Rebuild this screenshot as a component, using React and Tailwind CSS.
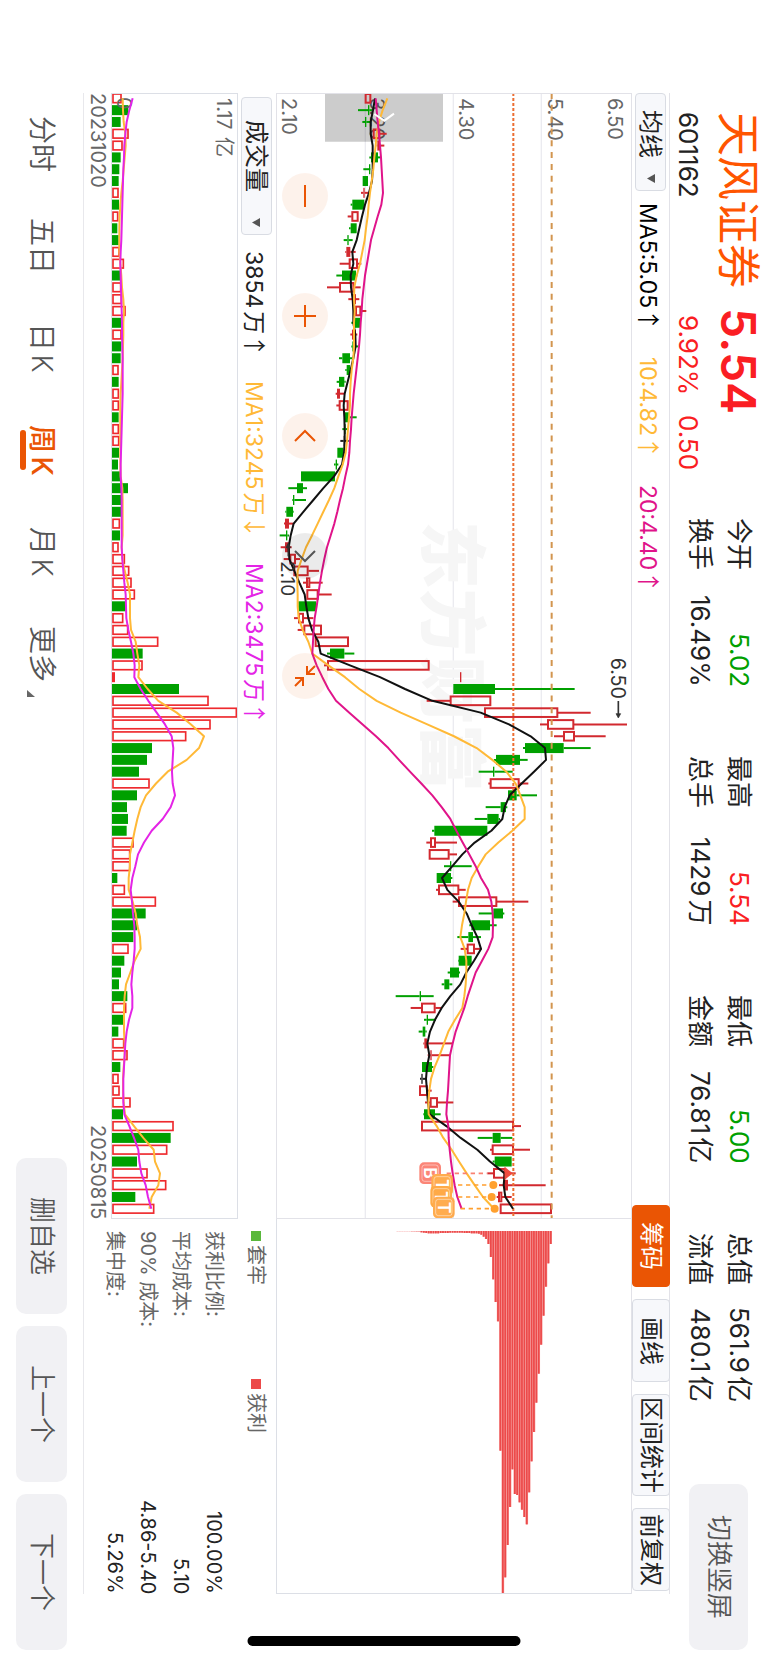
import React from "react";

// Chart geometry is expressed in thirds of a pixel. Each bar takes one step along Y.
const FIRST = 16;
const STEP = 35.44;
const barY = (i) => FIRST + STEP * i;

const GREEN = "#00a000";
const RED = "#d2292f";
const VOLUME_RED = "#ee2a2e";

// kind, low, body start, body end, high. g = down, r = up, f = up filled, k = flat
const CANDLES = [
  ["r", 1095, 1095, 1113, 1113], ["g", 1074, 1104, 1108, 1118], ["g", 1087, 1095, 1099, 1112],
  ["r", 1119, 1119, 1140, 1160], ["f", 1130, 1132, 1140, 1153], ["g", 1108, 1113, 1134, 1141],
  ["g", 1090, 1107, 1111, 1112], ["g", 1088, 1088, 1104, 1104], ["f", 1083, 1090, 1094, 1106],
  ["g", 1052, 1057, 1093, 1093], ["r", 1043, 1055, 1075, 1075], ["g", 1047, 1052, 1070, 1070],
  ["g", 1031, 1042, 1046, 1058], ["f", 1036, 1039, 1051, 1067], ["r", 1019, 1047, 1073, 1084],
  ["g", 1009, 1026, 1068, 1072], ["r", 981, 1018, 1062, 1082], ["f", 1045, 1058, 1068, 1078],
  ["r", 1066, 1066, 1083, 1099], ["g", 1054, 1063, 1080, 1080], ["f", 1051, 1056, 1068, 1072],
  ["g", 1054, 1057, 1063, 1075], ["g", 1017, 1027, 1050, 1056], ["g", 1036, 1040, 1050, 1055],
  ["g", 1010, 1017, 1033, 1037], ["f", 1007, 1011, 1020, 1034], ["r", 1009, 1017, 1045, 1045],
  ["g", 1035, 1035, 1048, 1070], ["g", 1027, 1033, 1037, 1045], ["k", 1021, 1031, 1035, 1046],
  ["g", 1012, 1012, 1030, 1030], ["g", 1002, 1007, 1011, 1015], ["g", 903, 903, 1005, 1005],
  ["g", 865, 891, 909, 921], ["g", 877, 879, 883, 918], ["g", 856, 859, 879, 881],
  ["f", 852, 855, 867, 880], ["g", 839, 858, 862, 867], ["f", 842, 855, 870, 875],
  ["r", 851, 869, 887, 900], ["r", 881, 881, 925, 957], ["r", 909, 919, 930, 968],
  ["r", 920, 920, 955, 995], ["g", 895, 895, 948, 948], ["r", 882, 895, 911, 940],
  ["r", 893, 911, 965, 965], ["r", 945, 945, 1046, 1046], ["g", 981, 990, 1033, 1063],
  ["r", 972, 982, 1288, 1288], ["f", 1380, 1380, 1384, 1384], ["g", 1360, 1360, 1485, 1724],
  ["r", 1280, 1350, 1473, 1473], ["r", 1453, 1453, 1674, 1772], ["r", 1620, 1642, 1722, 1881],
  ["r", 1662, 1690, 1724, 1817], ["g", 1569, 1575, 1691, 1772], ["g", 1482, 1488, 1560, 1583],
  ["g", 1436, 1479, 1483, 1538], ["r", 1465, 1470, 1558, 1585], ["g", 1524, 1524, 1550, 1611],
  ["g", 1457, 1502, 1518, 1522], ["g", 1424, 1462, 1496, 1500], ["g", 1296, 1303, 1462, 1462],
  ["r", 1279, 1291, 1307, 1371], ["r", 1287, 1287, 1348, 1371], ["g", 1332, 1350, 1354, 1415],
  ["g", 1310, 1310, 1353, 1357], ["r", 1308, 1315, 1377, 1397], ["r", 1358, 1375, 1491, 1585],
  ["g", 1436, 1480, 1509, 1513], ["g", 1408, 1414, 1470, 1490], ["g", 1372, 1405, 1419, 1443],
  ["r", 1382, 1401, 1424, 1445], ["g", 1374, 1376, 1415, 1415], ["g", 1343, 1350, 1377, 1380],
  ["g", 1325, 1333, 1348, 1357], ["g", 1187, 1259, 1263, 1301], ["r", 1232, 1264, 1306, 1325],
  ["g", 1272, 1280, 1284, 1308], ["g", 1256, 1268, 1276, 1280], ["f", 1270, 1273, 1281, 1359],
  ["f", 1283, 1291, 1295, 1350], ["g", 1266, 1266, 1296, 1300], ["k", 1260, 1264, 1268, 1280],
  ["r", 1258, 1258, 1283, 1295], ["r", 1275, 1290, 1313, 1360], ["g", 1270, 1272, 1305, 1322],
  ["r", 1264, 1264, 1541, 1563], ["g", 1433, 1478, 1502, 1537], ["r", 1470, 1476, 1541, 1590],
  ["g", 1478, 1484, 1535, 1535], ["r", 1462, 1480, 1515, 1547], ["r", 1497, 1513, 1523, 1637],
  ["r", 1490, 1495, 1506, 1535], ["r", 1500, 1500, 1655, 1655],
];

const MA5 = [
  1125, 1119, 1112, 1112, 1118, 1118, 1118, 1116, 1107, 1095, 1086, 1078, 1070, 1057, 1060, 1052, 1053, 1058, 1060,
  1060, 1066, 1067, 1060, 1052, 1043, 1034, 1031, 1033, 1034, 1034, 1032, 1026, 1002, 970, 940, 910, 881, 872, 866,
  868, 883, 898, 914, 919, 925, 936, 955, 962, 1050, 1140, 1215, 1297, 1442, 1527, 1592, 1635, 1638, 1602, 1565, 1529,
  1514, 1507, 1474, 1424, 1387, 1357, 1326, 1342, 1376, 1400, 1415, 1432, 1443, 1422, 1399, 1381, 1351, 1325, 1305,
  1290, 1282, 1288, 1281, 1278, 1281, 1284, 1289, 1339, 1382, 1432, 1470, 1514, 1511, 1516, 1539,
];
const MA10 = [
  1162, 1148, 1137, 1130, 1127, 1123, 1120, 1115, 1110, 1106, 1103, 1098, 1094, 1087, 1080, 1070, 1063, 1062, 1064,
  1062, 1062, 1062, 1060, 1055, 1052, 1050, 1050, 1047, 1044, 1041, 1037, 1028, 1015, 1003, 987, 970, 953, 936, 918,
  905, 893, 892, 893, 893, 896, 908, 925, 937, 985, 1035, 1078, 1130, 1202, 1282, 1362, 1430, 1477, 1519, 1547, 1561,
  1574, 1574, 1537, 1495, 1457, 1435, 1415, 1404, 1398, 1393, 1386, 1381, 1394, 1399, 1399, 1397, 1393, 1387, 1365,
  1345, 1332, 1319, 1304, 1293, 1288, 1285, 1286, 1310, 1330, 1355, 1377, 1400, 1424, 1449, 1482,
];
const MA20 = [
  1127, 1130, 1133, 1137, 1140, 1143, 1145, 1147, 1149, 1144, 1133, 1123, 1113, 1107, 1101, 1095, 1091, 1087, 1085,
  1082, 1080, 1077, 1073, 1069, 1065, 1061, 1058, 1055, 1053, 1050, 1048, 1044, 1036, 1029, 1020, 1012, 1003, 992,
  981, 973, 966, 960, 955, 950, 944, 941, 939, 937, 950, 967, 985, 1008, 1048, 1088, 1128, 1165, 1197, 1230, 1264,
  1297, 1325, 1351, 1369, 1388, 1408, 1427, 1443, 1464, 1474, 1478, 1479, 1478, 1465, 1446, 1427, 1415, 1403, 1393,
  1380, 1367, 1358, 1350, 1348, 1346, 1344, 1341, 1339, 1345, 1346, 1349, 1353, 1358, 1364, 1372, 1385,
];

const VOLUMES =
  "r365 g385 g362 r386 r368 g362 g358 g356 r356 g357 r355 g352 g356 r359 r372 g362 r364 r366 r377 g363 r365 g364 g362 r356 g356 r357 r357 g356 r357 r358 g357 g354 g360 g384 g364 g363 r360 g360 r356 r375 r388 r395 r405 g377 r370 r385 r475 g428 r428 f345 g537 r626 r711 r632 r559 g456 g441 g417 r449 g411 g381 g384 g380 r401 r391 r391 g352 r375 r468 g437 g411 g400 r386 g373 g363 g357 g382 r379 g372 g355 r373 r383 g361 r356 r359 r392 g369 r521 g512 r502 g411 r443 r499 g406 r463"
    .split(" ")
    .map((v) => [v[0], Number(v.slice(1))]);

const VMA1 = [
  368, 369, 371, 376, 377, 374, 371, 368, 364, 361, 359, 358, 358, 358, 361, 364, 366, 370, 372, 370, 370, 369, 368,
  366, 364, 362, 361, 361, 361, 361, 361, 361, 362, 367, 368, 368, 368, 368, 365, 367, 374, 383, 390, 390, 390, 393,
  407, 412, 418, 415, 443, 475, 530, 573, 612, 597, 560, 503, 468, 438, 422, 412, 404, 397, 390, 390, 386, 386, 398,
  407, 412, 420, 422, 404, 391, 378, 374, 372, 372, 372, 374, 374, 371, 369, 369, 371, 375, 402, 430, 461, 465, 480,
  475, 455, 448,
];
const VMA2 = [
  398, 388, 380, 376, 373, 372, 370, 369, 368, 367, 366, 365, 364, 362, 361, 362, 363, 364, 365, 366, 366, 367, 368,
  368, 368, 368, 367, 366, 365, 364, 363, 362, 362, 364, 365, 365, 365, 365, 365, 367, 370, 373, 377, 378, 379, 385,
  393, 400, 404, 403, 422, 445, 470, 495, 515, 520, 518, 516, 518, 525, 512, 488, 455, 432, 414, 406, 397, 392, 396,
  399, 403, 404, 404, 401, 397, 394, 397, 397, 387, 380, 376, 374, 372, 370, 370, 370, 373, 388, 402, 415, 418, 424,
  437, 444, 454,
];

// Shares held per price level, from the highest price down.
const CHIPS = [
  39, 97, 167, 254, 341, 428, 515, 603, 691, 784, 880, 858, 836, 814, 792, 789, 715, 828, 942, 1039, 1088, 659, 271,
  213, 145, 78, 39, 24, 17, 11, 8, 7, 7, 7, 6, 6, 6, 5, 5, 5, 5, 5, 5, 6, 6, 6, 6, 7, 7, 7, 7, 7, 6, 5, 4, 3, 3, 2, 2,
  1, 1, 1, 1, 1, 1,
];

const line = (values) => values.map((x, i) => `${x},${barY(i)}`).join(" ");

function Turned({ x, y, size = 60, fill = "#666", weight = 400, children }) {
  return (
    <text transform={`translate(${x} ${y}) rotate(90)`} fontSize={size} fill={fill} fontWeight={weight}>
      {children}
    </text>
  );
}

function Candle({ candle, i }) {
  const [kind, low, from, to, high] = candle;
  const color = kind === "g" ? GREEN : kind === "k" ? "#222" : RED;
  const y = barY(i);
  return (
    <g stroke={color} strokeWidth="6">
      {low < from && <path d={`M${low} ${y}H${from}`} />}
      {high > to && <path d={`M${to} ${y}H${high}`} />}
      {kind === "r" ? (
        <rect x={from + 2} y={y - 13} width={Math.max(to - from - 4, 3)} height="26" fill="none" />
      ) : (
        <rect x={from} y={y - 15} width={to - from} height="30" fill={color} stroke="none" />
      )}
    </g>
  );
}

function Badge({ x, y, color, letter }) {
  return (
    <g>
      <rect x={x} y={y} width="65" height="65" rx="14" fill={color} />
      <rect x={x + 8} y={y + 8} width="49" height="49" rx="8" fill="none" stroke="#fff" strokeOpacity=".45" strokeWidth="3" />
      <Turned x={x + 14} y={y + 15} size={53} fill="#fff" weight={600}>
        {letter}
      </Turned>
    </g>
  );
}

function PriceChart() {
  return (
    <svg viewBox="831 3 1062 3372" className="h-full w-full [writing-mode:horizontal-tb]" role="img" aria-label="周K">
      <g stroke="#ebebf0" strokeWidth="4">
        <path d="M1096 0V3378M1360 0V3378M1624 0V3378" />
      </g>
      <Turned x={1282} y={1284} size={203} fill="#f6f6f6" weight={900}>
        东方财富
      </Turned>
      <Turned x={847} y={15}>2.10</Turned>
      <Turned x={1111} y={15}>3.20</Turned>
      <Turned x={1377} y={15}>4.30</Turned>
      <Turned x={1643} y={15}>5.40</Turned>
      <Turned x={1824} y={15}>6.50</Turned>
      <path d="M975 0H1329V146H975Z" fill="#000" fillOpacity=".2" />
      {CANDLES.map((c, i) => (
        <Candle key={i} candle={c} i={i} />
      ))}
      <path d="M1540 0V3378" stroke="#ec6e32" strokeWidth="6" strokeDasharray="9 6" />
      <path d="M1655 0V3378" stroke="#d2954f" strokeWidth="6" strokeDasharray="18 17.44" />
      <g fill="none" strokeWidth="6" strokeLinejoin="round">
        <polyline points={line(MA5)} stroke="#111" />
        <polyline points={line(MA10)} stroke="#ffb937" />
        <polyline points={line(MA20)} stroke="#e0148a" />
      </g>
      <path d="M1123 63L1153 83L1182 62" fill="none" stroke="#fff" strokeWidth="6" />
      <g stroke="#333" strokeWidth="5" fill="#333">
        <path d="M1855 1824V1868" />
        <path d="M1848 1862H1862L1855 1875Z" strokeWidth="2" />
        <path d="M865 1354V1390" />
        <path d="M858 1364H872L865 1350Z" strokeWidth="2" />
      </g>
      <Turned x={1834} y={1694} size={59} fill="#333">6.50</Turned>
      <Turned x={843} y={1404} size={57} fill="#333">2.10</Turned>
      <g fill="none" strokeWidth="5" strokeDasharray="13 11">
        <path d="M1340 3241H1462" stroke="#f98272" />
        <path d="M1374 3276H1470M1374 3312H1465M1382 3347H1474" stroke="#ff9f2e" />
      </g>
      <path d="M1516 3226L1534 3241L1516 3256Z" fill="#f04a3e" stroke="#f04a3e" strokeWidth="5" />
      <g fill="#ffa02e">
        <circle cx="1480" cy="3276" r="12" />
        <circle cx="1475" cy="3312" r="12" />
        <circle cx="1484" cy="3347" r="12" />
      </g>
      <g opacity=".88">
        <Badge x={1258} y={3208} color="#fb7565" letter="B" />
        <Badge x={1294} y={3243} color="#ffa137" letter="T" />
        <Badge x={1291} y={3279} color="#ff9f2e" letter="T" />
        <Badge x={1299} y={3311} color="#ffa137" letter="T" />
      </g>
    </svg>
  );
}

function VolumeChart() {
  return (
    <svg viewBox="336 3 375 3372" className="h-full w-full [writing-mode:horizontal-tb]" role="img" aria-label="成交量">
      {VOLUMES.map(([kind, x], i) =>
        kind === "r" ? (
          <rect key={i} x="339" y={barY(i) - 13} width={x - 341} height="26" fill="none" stroke={VOLUME_RED} strokeWidth="5" />
        ) : (
          <rect key={i} x="336" y={barY(i) - 15} width={x - 336} height="30" fill={kind === "g" ? GREEN : VOLUME_RED} />
        ),
      )}
      <Turned x={351} y={12}>0</Turned>
      <Turned x={652} y={15}>1.17亿</Turned>
      <g fill="none" strokeWidth="6" strokeLinejoin="round">
        <polyline points={line(VMA1)} stroke="#ffb937" />
        <polyline points={line(VMA2)} stroke="#e424e6" />
      </g>
    </svg>
  );
}

function ChipChart() {
  return (
    <svg viewBox="831 0 1062 1122" className="h-full w-full" role="img" aria-label="筹码">
      {CHIPS.map((len, i) => {
        const x = 1649.5 - i * 7.18;
        return (
          <g key={i} opacity={i > 54 ? 0.45 : 1}>
            <rect x={x - 1} y="36" width="7.5" height={len} fill="#f48a8a" />
            <rect x={x} y="36" width="5" height={len} fill="#ec4a4a" />
          </g>
        );
      })}
    </svg>
  );
}

function DropDown({ name, value, className }) {
  return (
    <div className={"flex shrink-0 items-center rounded-[4px] border border-[#d9dce3] bg-[#f7f8fb] " + className}>
      <select
        aria-label={name}
        className="h-full min-h-0 w-full appearance-none border-0 bg-transparent text-[24px] leading-[30px] text-[#222] outline-none [text-orientation:sideways] [writing-mode:vertical-rl]"
      >
        <option>{value}</option>
      </select>
      <svg viewBox="0 0 8 9" className="pointer-events-none -mt-4 h-[9px] w-2 shrink-0" aria-hidden="true">
        <path d="M0 4.500L8 0V9Z" fill="#555" />
      </svg>
    </div>
  );
}

function Reading({ color, arrow, children }) {
  return (
    <span className={color}>
      {children}
      <span className="font-['Noto_Sans_CJK_SC',sans-serif]">{arrow}</span>
    </span>
  );
}

function Legend({ color, children }) {
  return (
    <div className="flex h-[148px] items-center gap-1">
      <span className={"size-[10px] " + color} />
      <span>{children}</span>
    </div>
  );
}

const STATS = [
  ["今开", "5.02", "text-[#00a000]"],
  ["最高", "5.54", "text-[#fa1e23]"],
  ["最低", "5.00", "text-[#00a000]"],
  ["总值", "561.9亿", ""],
  ["换手", "16.49%", ""],
  ["总手", "1429万", ""],
  ["金额", "76.81亿", ""],
  ["流值", "480.1亿", ""],
];

const COSTS = [
  ["获利比例:", "100.00%"],
  ["平均成本:", "5.10"],
  ["90% 成本:", "4.86-5.40"],
  ["集中度:", "5.26%"],
];

const TOOLS = [
  ["筹码", "h-[82px] border-[#ea5504] bg-[#ea5504] text-white"],
  ["画线", "h-[83px] border-[#d9dce3] bg-[#f7f8fb]"],
  ["区间统计", "h-[102px] border-[#d9dce3] bg-[#f7f8fb]"],
  ["前复权", "h-[83px] border-[#d9dce3] bg-[#f7f8fb]"],
];

const CONTROLS = [
  ["缩小", "M23 12V34", "bg-[#ea5504]/8 text-[#ea5504]"],
  ["放大", "M23 12V34M12 23H34", "bg-[#ea5504]/8 text-[#ea5504]"],
  ["向前", "M13 28L23 18L33 28", "bg-[#ea5504]/8 text-[#ea5504]"],
  ["向后", "M13 18L23 28L33 18", "bg-black/8 text-[#555]"],
  ["收起", "M33 13L25 21M25 13V21H33M13 33L21 25M13 25H21V33", "bg-[#ea5504]/8 text-[#ea5504]"],
];

const PERIODS = ["分时", "五日", "日K", "周K", "月K", "更多"];

export default function App() {
  return (
    <div className="relative flex h-screen w-full flex-col overflow-hidden bg-white font-['Inter','Noto_Sans_CJK_SC',sans-serif] leading-none text-[#222] [text-autospace:normal] [text-orientation:sideways] [writing-mode:vertical-rl]">
      <header className="flex w-[98px] shrink-0 pt-[112px] pb-[13px] whitespace-nowrap">
        <div className="flex h-[406px] shrink-0 flex-col">
          <div className="flex w-[60px] items-center gap-5">
            <h1 className="text-[44px] text-[#ff5500]">天风证券</h1>
            <strong className="text-[48px] font-semibold text-[#fa1e23]">5.54</strong>
          </div>
          <div className="flex w-[38px] items-center pr-[2px] text-[26px]">
            <span className="h-[203px]">601162</span>
            <span className="h-[100px] text-[#fa1e23]">9.92%</span>
            <span className="text-[#fa1e23]">0.50</span>
          </div>
        </div>
        <dl className="mr-[10px] grid w-[78px] flex-1 grid-cols-4 grid-rows-2 gap-x-[69px] pb-[82px] text-[26px]">
          {STATS.map(([label, value, color]) => (
            <div key={label} className="flex items-center justify-between">
              <dt>{label}</dt>
              <dd className={color}>{value}</dd>
            </div>
          ))}
        </dl>
        <button className="mr-5 h-[166px] w-[59px] shrink-0 rounded-[10px] bg-[#f1f1f4] text-[26px] font-[350] text-[#555]">
          切换竖屏
        </button>
      </header>

      <main className="flex min-w-0 flex-1 flex-col pt-[93px] pb-[69px]">
        <div className="flex w-[39px] shrink-0 items-center justify-between border-r border-l border-[#e2e2e8] pb-[3px] text-[24px] whitespace-nowrap">
          <div className="flex items-center gap-3">
            <DropDown name="指标" value="均线" className="h-[98px] w-[31px] pt-4" />
            <div className="flex gap-[26px] pr-1 text-[23px]">
              <Reading color="text-black" arrow="↑">MA5:5.05</Reading>
              <Reading color="text-[#ffb937]" arrow="↑">10:4.82</Reading>
              <Reading color="text-[#e0148a]" arrow="↑">20:4.40</Reading>
            </div>
          </div>
          <div className="flex gap-3">
            {TOOLS.map(([label, look]) => (
              <button key={label} className={"w-[38px] rounded-[4px] border " + look}>
                {label}
              </button>
            ))}
          </div>
        </div>

        <div className="grid min-w-0 flex-1 grid-cols-[1126fr_375fr] grid-rows-[minmax(0,1fr)]">
          <section className="relative min-h-0 min-w-0 border-t border-b border-l border-[#e2e2e8]">
            <PriceChart />
            <div className="absolute top-[79px] left-[5px] flex gap-[74px]">
              {CONTROLS.map(([label, path, look]) => (
                <button key={label} aria-label={label} className={"size-[46px] rounded-full " + look}>
                  <svg viewBox="0 0 46 46" className="size-full" fill="none" stroke="currentColor" strokeWidth="2">
                    <path d={path} />
                  </svg>
                </button>
              ))}
            </div>
          </section>
          <section className="min-h-0 min-w-0 border-b border-l border-[#dcdfe6]">
            <ChipChart />
          </section>
        </div>

        <div className="grid w-[38px] shrink-0 grid-cols-[1126fr_375fr] grid-rows-[minmax(0,1fr)] pr-[2px] whitespace-nowrap">
          <div className="flex min-h-0 items-center gap-4 pt-1 text-[23px]">
            <DropDown name="副图指标" value="成交量" className="h-[138px] w-[31px] pt-[22px]" />
            <div className="flex gap-6 pr-1">
              <Reading color="" arrow="↑">3854万</Reading>
              <Reading color="text-[#ffb937]" arrow="↓">MA1:3245万</Reading>
              <Reading color="text-[#e424e6]" arrow="↑">MA2:3475万</Reading>
            </div>
          </div>
          <div className="flex min-h-0 items-center pt-3 text-[20px] text-[#666]">
            <Legend color="bg-[#5ab83c]">套牢</Legend>
            <Legend color="bg-[#ec4a4a]">获利</Legend>
          </div>
        </div>

        <div className="grid w-[155px] shrink-0 grid-cols-[1126fr_375fr] grid-rows-[minmax(0,1fr)] border-l border-[#e8e8ec] text-[20px] whitespace-nowrap">
          <div className="flex min-h-0 min-w-0 flex-col">
            <section className="w-[127px] shrink-0 border border-[#dcdfe6]">
              <VolumeChart />
            </section>
            <div className="flex flex-1 items-center justify-between text-[#666]">
              <time>20231020</time>
              <time>20250815</time>
            </div>
          </div>
          <dl className="flex min-h-0 flex-col pt-3 pr-2">
            {COSTS.map(([label, value]) => (
              <div key={label} className="flex w-[33px] items-center justify-between">
                <dt className="text-[#666]">{label}</dt>
                <dd>{value}</dd>
              </div>
            ))}
          </dl>
        </div>
      </main>

      <footer className="flex w-[83px] shrink-0 items-center justify-between pt-[93px] pb-[13px] whitespace-nowrap">
        <nav className="flex h-[612px] w-full text-[28px] font-[350] text-[#555]">
          {PERIODS.map((p) => (
            <a
              key={p}
              href={"#" + p}
              aria-current={p === "周K" ? "page" : undefined}
              className={"relative flex flex-1 items-center justify-center " + (p === "周K" ? "font-medium text-[#ea5504]" : "")}
            >
              {p}
              {p === "周K" && <span className="absolute top-[31px] left-5 h-10 w-[6px] rounded-full bg-[#ea5504]" />}
              {p === "更多" && (
                <svg viewBox="0 0 8 7" className="absolute bottom-2 left-[27px] h-[7px] w-2" aria-hidden="true">
                  <path d="M0 0L8 7H0Z" fill="#666" />
                </svg>
              )}
            </a>
          ))}
        </nav>
        <div className="flex gap-3 text-[26px] font-[350] text-[#555]">
          <button className="h-[156px] w-[51px] rounded-[10px] bg-[#f1f1f4]">删自选</button>
          <button className="h-[156px] w-[51px] rounded-[10px] bg-[#f1f1f4]">上一个</button>
          <button className="h-[156px] w-[51px] rounded-[10px] bg-[#f1f1f4]">下一个</button>
        </div>
      </footer>

      <div className="absolute bottom-[17px] left-1/2 h-[10px] w-[273px] -translate-x-1/2 rounded-full bg-black" />
    </div>
  );
}
